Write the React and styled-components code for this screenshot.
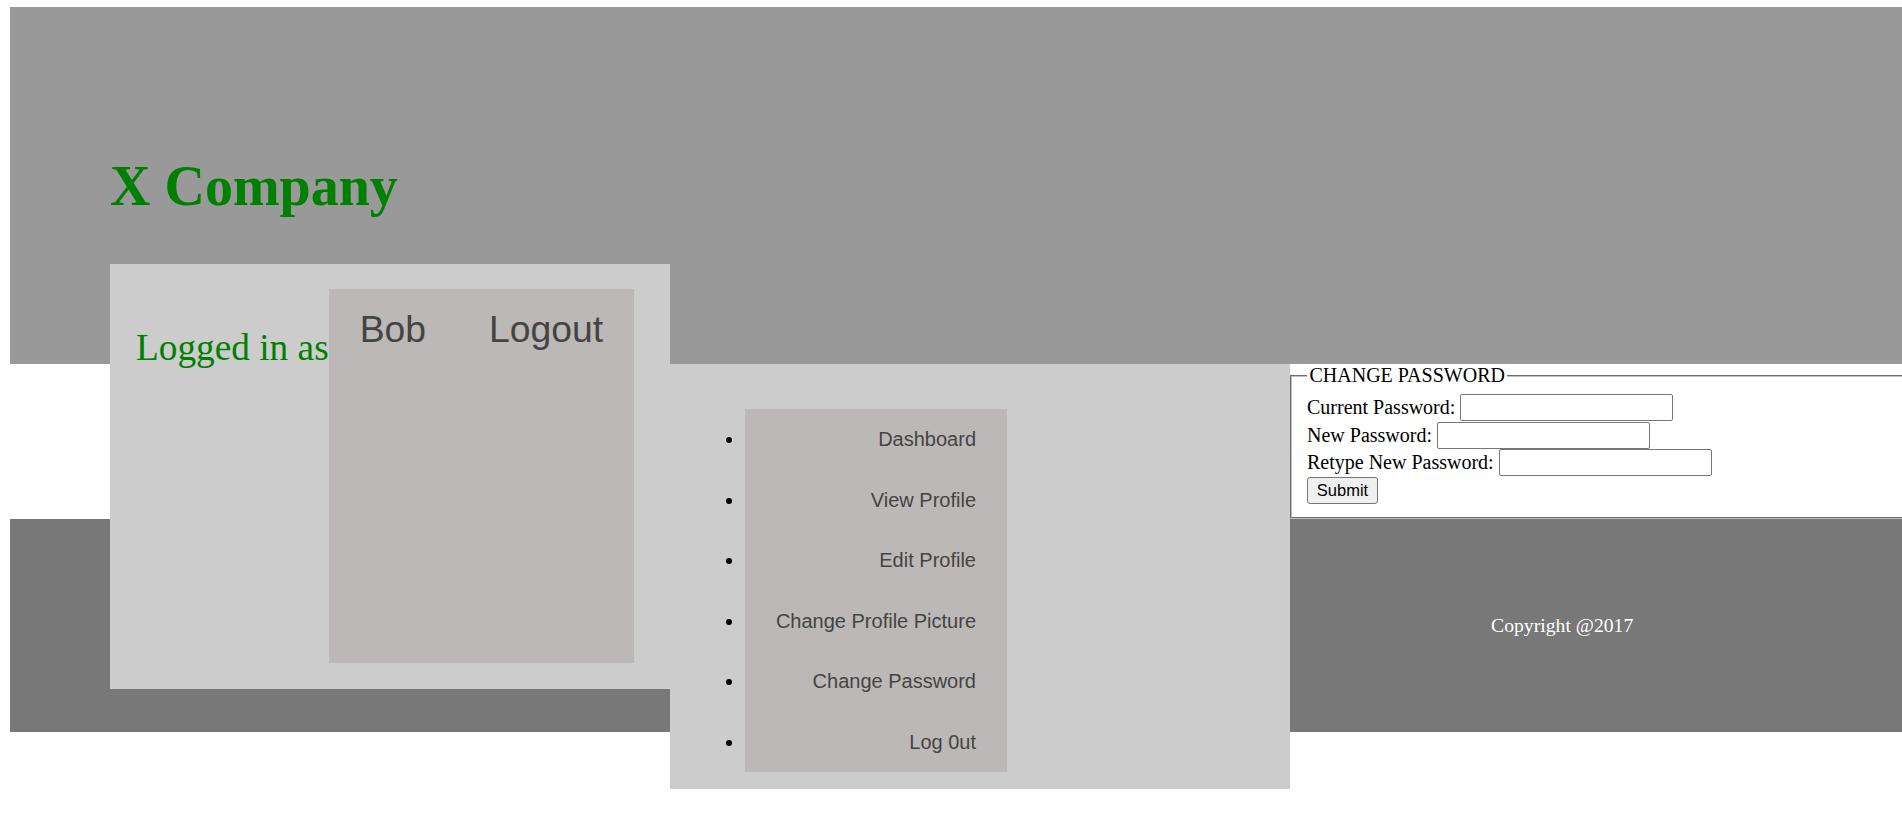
import React from "react";
import styled, { createGlobalStyle } from "styled-components";

const GlobalStyle = createGlobalStyle`
  body {
    margin: 7px 0 0 10px;
    font-family: "Liberation Serif", "Times New Roman", serif;
    font-size: 20px;
    color: #000;
    background: #fff;
  }
`;

const Page = styled.div`
  display: flex;
  flex-direction: column;
  padding-bottom: 72px;
`;

const Header = styled.header`
  flex: 0 0 357px;
  height: 357px;
  background: #999999;
  padding: 147px 0 0 100px;
  box-sizing: border-box;
  display: flex;
  flex-direction: column;
  align-items: flex-start;
`;

const Brand = styled.h1`
  margin: 0;
  font-family: "Liberation Serif", "Times New Roman", serif;
  font-size: 56px;
  line-height: 64px;
  font-weight: bold;
  color: #008000;
`;

const LoggedBox = styled.div`
  position: relative;
  z-index: 2;
  flex: 0 0 425px;
  margin-top: 46px;
  width: 560px;
  height: 425px;
  box-sizing: border-box;
  padding: 25px 0 0 26px;
  background: #cccccc;
  display: flex;
  align-items: flex-start;
`;

const LoggedLabel = styled.span`
  margin-top: 38px;
  font-family: "Liberation Serif", "Times New Roman", serif;
  font-size: 37.3px;
  line-height: 42px;
  color: #008000;
  white-space: nowrap;
`;

const UserBox = styled.ul`
  list-style: none;
  margin: 0;
  flex: 0 0 305px;
  height: 374px;
  box-sizing: border-box;
  padding: 19px 0 0 31px;
  background: #bcb8b7;
  display: flex;
  align-items: flex-start;
  gap: 63px;
`;

const UserItem = styled.li`
  font-family: "Liberation Sans", Arial, sans-serif;
  font-size: 37.3px;
  line-height: 43px;
  color: #444;
`;

const Main = styled.main`
  display: flex;
  align-items: flex-start;
  flex: 0 0 155px;
  height: 155px;
`;

const Nav = styled.nav`
  position: relative;
  z-index: 1;
  flex: 0 0 620px;
  height: 425px;
  margin-left: 660px;
  box-sizing: border-box;
  padding: 45px 0 0 75px;
  background: #cccccc;
`;

const NavList = styled.ul`
  margin: 0;
  padding: 0;
  width: 262px;
  list-style: disc outside;
`;

const NavItem = styled.li`
  height: 60.5px;
  box-sizing: border-box;
  padding: 19px 31px 0 0;
  background: #bcb8b7;
  text-align: right;
  font-family: "Liberation Sans", Arial, sans-serif;
  font-size: 20px;
  line-height: 23px;
  color: #444;
  &::marker { color: #000; }
`;

const Fieldset = styled.fieldset`
  flex: 1 1 auto;
  min-width: 0;
  margin: 0;
  padding: 7px 15px 12.5px;
  border: 2px groove rgb(192, 192, 192);
  border-right-width: 0;
  box-sizing: border-box;
  font-size: 20px;
`;

const Legend = styled.legend`
  padding: 0 2.5px;
  font-size: 20px;
  line-height: 23px;
`;

const FormRow = styled.div`
  display: flex;
  align-items: center;
  gap: 5px;
  height: 27.5px;
  font-size: 20px;
  line-height: 23px;
`;

const TextInput = styled.input`
  width: 213px;
  height: 27px;
  box-sizing: border-box;
  border: 1px solid #767676;
  border-radius: 2px;
  padding: 1px 3px;
  font-family: "Liberation Sans", Arial, sans-serif;
  font-size: 16.5px;
  background: #fff;
`;

const SubmitButton = styled.button`
  width: 71px;
  height: 27px;
  box-sizing: border-box;
  padding: 0 8px;
  border: 1px solid #767676;
  border-radius: 3px;
  background: #efefef;
  color: #000;
  font-family: "Liberation Sans", Arial, sans-serif;
  font-size: 16.5px;
`;

const Footer = styled.footer`
  flex: 0 0 213px;
  height: 213px;
  background: #787878;
  display: flex;
  align-items: center;
`;

const Copyright = styled.p`
  margin: 0 0 0 1481px;
  font-family: "Liberation Serif", "Times New Roman", serif;
  font-size: 19.7px;
  line-height: 23px;
  color: #fff;
  white-space: nowrap;
`;

const navLinks = [
  "Dashboard",
  "View Profile",
  "Edit Profile",
  "Change Profile Picture",
  "Change Password",
  "Log 0ut",
];

const fields = ["Current Password:", "New Password:", "Retype New Password:"];

export default function App() {
  return (
    <>
      <GlobalStyle />
      <Page>
        <Header>
          <Brand>X Company</Brand>
          <LoggedBox>
            <LoggedLabel>Logged in as</LoggedLabel>
            <UserBox>
              <UserItem>Bob</UserItem>
              <UserItem>Logout</UserItem>
            </UserBox>
          </LoggedBox>
        </Header>
        <Main>
          <Nav>
            <NavList>
              {navLinks.map((l) => (
                <NavItem key={l}>{l}</NavItem>
              ))}
            </NavList>
          </Nav>
          <Fieldset>
            <Legend>CHANGE PASSWORD</Legend>
            {fields.map((f) => (
              <FormRow key={f}>
                <span>{f}</span>
                <TextInput type="password" />
              </FormRow>
            ))}
            <FormRow>
              <SubmitButton type="button">Submit</SubmitButton>
            </FormRow>
          </Fieldset>
        </Main>
        <Footer>
          <Copyright>Copyright @2017</Copyright>
        </Footer>
      </Page>
    </>
  );
}
